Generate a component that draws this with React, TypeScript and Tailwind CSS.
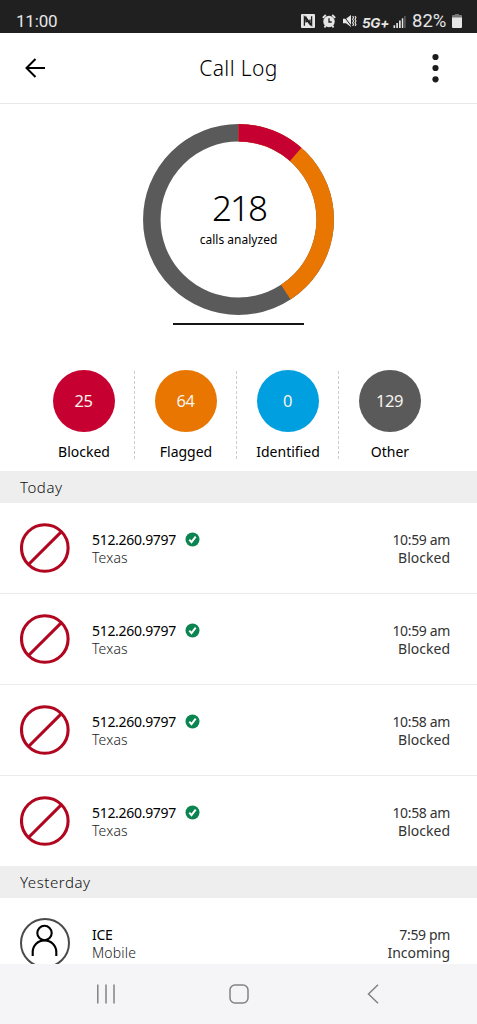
import React from "react";

type Call = { name: string; place: string; time: string; status: string; blocked: boolean };

const today: Call[] = ["10:59 am", "10:59 am", "10:58 am", "10:58 am"].map((time) => ({
  name: "512.260.9797",
  place: "Texas",
  time,
  status: "Blocked",
  blocked: true,
}));

const stats = [
  { value: 25, label: "Blocked", color: "bg-[#c70032]" },
  { value: 64, label: "Flagged", color: "bg-[#e87600]" },
  { value: 0, label: "Identified", color: "bg-[#009fdf]" },
  { value: 129, label: "Other", color: "bg-[#5a5a5a]" },
];

function StatusBar() {
  return (
    <header className="flex h-[33px] shrink-0 items-center justify-between bg-[#202020] pl-[16px] pr-[15px] pt-[9px] text-[#e6e6e6]">
      <span className="font-['Roboto'] text-[17px] leading-5 tracking-[-0.2px]">11:00</span>
      <div className="flex items-center">
        <svg className="mr-[7px]" width="14" height="14" viewBox="0 0 14 14">
          <rect width="14" height="14" rx="1" fill="#e6e6e6" />
          <path d="M3.4 11.8V3L9 10.4V5.4M5 3.6V2.6M10.6 2.2V11L5 3.6V8.6" fill="none" stroke="#202020" strokeWidth="1.3" />
        </svg>
        <svg className="mr-[6px]" width="14" height="14" viewBox="0 0 14 14">
          <circle cx="7" cy="7.5" r="5.7" fill="#e6e6e6" />
          <path d="M.8 3.8 3.8 1M13.2 3.8 10.2 1M2.5 13.4l1.2-1.9M11.5 13.4l-1.2-1.9" stroke="#e6e6e6" strokeWidth="1.8" />
          <path d="M7 4.2V8h2.8" fill="none" stroke="#202020" strokeWidth="1.3" />
        </svg>
        <svg className="mr-[6px]" width="15" height="14" viewBox="0 0 15 14">
          <path d="M1 4.8h3L9 1v12L4 9.3H1z" fill="#e6e6e6" />
          <path d="M1.3 1.5 9.7 12.5" stroke="#202020" strokeWidth="1" />
          <path d="m10.6 2 1 1.6-1 1.7 1 1.7-1 1.7 1 1.7-1 1.6M13 2l1 1.6-1 1.7 1 1.7-1 1.7 1 1.7-1 1.6" fill="none" stroke="#e6e6e6" strokeWidth="1.1" />
        </svg>
        <span className="ml-[-1px] mr-[4px] mt-[3px] w-[27px] whitespace-nowrap font-['Inter'] text-[13.5px] font-bold italic leading-4 tracking-[-0.3px]">5G+</span>
        <svg className="mr-[6px] mt-[1px]" width="13" height="12" viewBox="0 0 13 13" fill="#e6e6e6">
          <path d="M0 10h1.8v3H0zM3 7.5h1.8V13H3zM6 5h1.8v8H6zM9 2.5h1.6V13H9z" />
          <path d="M11.7 0H13v13h-1.3z" opacity=".4" />
        </svg>
        <span className="w-[39px] whitespace-nowrap font-['Roboto'] text-[18.5px] leading-5">82%</span>
        <svg className="ml-[1px]" width="10" height="14" viewBox="0 0 10 14">
          <path d="M3 0h4v1.5h2A1 1 0 0 1 10 2.5V13a1 1 0 0 1-1 1H1a1 1 0 0 1-1-1V2.5a1 1 0 0 1 1-1h2z" fill="#e6e6e6" />
          <path d="M3 0h4v1.5h3v2H0v-2h3z" fill="#777" />
        </svg>
      </div>
    </header>
  );
}

function Ring() {
  return (
    <div className="grid h-[192px] w-[191px] place-items-center">
      <svg className="col-start-1 row-start-1" width="191" height="192" viewBox="0.5 0.5 191 192" fill="none" strokeWidth="17.5">
        <g transform="rotate(-90 96 96)">
          <circle cx="96" cy="96" r="86.7" stroke="#5a5a5a" />
          <circle cx="96" cy="96" r="86.7" stroke="#e87600" pathLength="218" strokeDasharray="89 218" />
          <circle cx="96" cy="96" r="86.7" stroke="#c70032" pathLength="218" strokeDasharray="25 218" />
        </g>
      </svg>
      <div className="col-start-1 row-start-1 flex flex-col items-center text-black">
        <span className="ml-px mt-[-6px] text-[35px] font-light leading-[42px] tracking-[-2px]">218</span>
        <span className="mt-[3px] text-[12px] leading-4 tracking-[0.02px]">calls analyzed</span>
      </div>
    </div>
  );
}

function BlockIcon() {
  return (
    <svg width="50" height="50" viewBox="0 0 50 50" fill="none" stroke="#b1061f" strokeWidth="3.1">
      <circle cx="24.8" cy="25" r="23.3" />
      <path d="M9 41 41.2 8.8" />
    </svg>
  );
}

function PersonIcon() {
  return (
    <svg width="50" height="50" viewBox="0 0 50 50" fill="none">
      <circle cx="25" cy="25" r="24" stroke="#4a4a4a" strokeWidth="2" />
      <g stroke="#000" strokeWidth="2.1">
        <circle cx="24.5" cy="15" r="7.2" />
        <path d="M12.7 38v-3.8a11.8 11.8 0 0 1 23.6 0V38" />
      </g>
    </svg>
  );
}

function Section({ title }: { title: string }) {
  return (
    <h2 className="flex h-8 shrink-0 items-center bg-[#eeeeee] pl-5 text-[15px] font-light tracking-[0.55px] text-[#111]">{title}</h2>
  );
}

function CallRow({ call, last }: { call: Call; last?: boolean }) {
  return (
    <li className={last ? "flex h-[90px] shrink-0 items-start px-5 pt-5" : "flex h-[91px] shrink-0 items-start border-b border-[#ececec] px-5 pt-5"}>
      {call.blocked ? <BlockIcon /> : <PersonIcon />}
      <div className="ml-[22px] mt-[8px] text-[14px] leading-[18px]">
        <div className="flex items-center text-black">
          <span className="tracking-[-0.3px]">{call.name}</span>
          {call.blocked && (
            <svg className="mb-[2px] ml-[9px]" width="15" height="15" viewBox="0 0 15 15">
              <circle cx="7.5" cy="7.5" r="7" fill="#0b8450" />
              <path d="m4.3 7.6 2.2 2.6 4.2-5.5" fill="none" stroke="#fff" strokeWidth="2" />
            </svg>
          )}
        </div>
        <div className="text-[14px] font-light tracking-[0.15px] text-[#222]">{call.place}</div>
      </div>
      <div className="ml-auto mr-[7px] mt-[8px] text-right text-[14px] leading-[18px] text-[#333]">
        <div className="tracking-[-0.35px]">{call.time}</div>
        <div>{call.status}</div>
      </div>
    </li>
  );
}

export default function App() {
  return (
    <div className="flex h-[1024px] w-[477px] flex-col overflow-hidden bg-white font-['Noto_Sans',sans-serif]">
      <StatusBar />
      <nav className="flex h-[71px] shrink-0 items-center border-b border-[#e8e8e8] pl-[25px] pr-[37px]">
        <svg width="20" height="20" viewBox="0 0 20 20" fill="none" stroke="#000" strokeWidth="2">
          <path d="M20 10H1.5M10.5 1 1.5 10l9 9" />
        </svg>
        <h1 className="ml-[2px] flex-1 text-center text-[21px] font-light leading-7 tracking-[0.4px] text-black">Call Log</h1>
        <svg width="10" height="30" viewBox="0 0 10 30" fill="#1c1c1c">
          <circle cx="5.5" cy="4" r="3.1" />
          <circle cx="5.5" cy="15" r="3.1" />
          <circle cx="5.5" cy="26.3" r="3.1" />
        </svg>
      </nav>
      <main className="flex min-h-0 flex-1 flex-col overflow-hidden">
        <section className="flex h-[367px] shrink-0 flex-col items-center pt-[20px]">
          <Ring />
          <div className="mt-[7px] h-[2px] w-[131px] bg-[#151515]" />
          <div className="ml-[33px] mt-[45px] flex w-[408px] self-start">
            {stats.map((s, i) => (
              <div key={s.label} className="flex h-[91px] w-[102px] items-start">
                <div className="flex flex-1 flex-col items-center">
                  <div className={`${s.color} flex size-[62px] items-center justify-center rounded-full text-[16.5px] tracking-[-0.4px] text-[#f8f4ee]`}>{s.value}</div>
                  <span className="ml-[1px] mt-[11px] text-[14px] leading-[18px] text-black">{s.label}</span>
                </div>
                {i < 3 ? (
                  <svg width="1" height="90" viewBox="0 0 1 90">
                    <path d="M.5 1V90" stroke="#cccccc" strokeDasharray="3 2" />
                  </svg>
                ) : (
                  <span className="w-px" />
                )}
              </div>
            ))}
          </div>
        </section>
        <Section title="Today" />
        <ul className="shrink-0">
          {today.map((c, i) => (
            <CallRow key={i} call={c} last={i === 3} />
          ))}
        </ul>
        <Section title="Yesterday" />
        <ul className="shrink-0">
          <CallRow call={{ name: "ICE", place: "Mobile", time: "7:59 pm", status: "Incoming", blocked: false }} />
        </ul>
      </main>
      <footer className="flex h-[60px] shrink-0 items-center bg-[#f5f5f8] pl-[96px]">
        <svg width="20" height="20" viewBox="0 0 20 20" stroke="#828284" strokeWidth="1.5">
          <path d="M1.8 .5v19M10 .5v19M18 .5v19" />
        </svg>
        <svg className="ml-[113px]" width="20" height="20" viewBox="0 0 20 20" fill="none" stroke="#828284" strokeWidth="1.5">
          <rect x="1" y="1" width="18" height="18" rx="5" />
        </svg>
        <svg className="ml-[118px]" width="12" height="20" viewBox="0 0 12 20" fill="none" stroke="#828284" strokeWidth="1.5">
          <path d="M11 .7 1.5 10l9.5 9.3" />
        </svg>
      </footer>
    </div>
  );
}
